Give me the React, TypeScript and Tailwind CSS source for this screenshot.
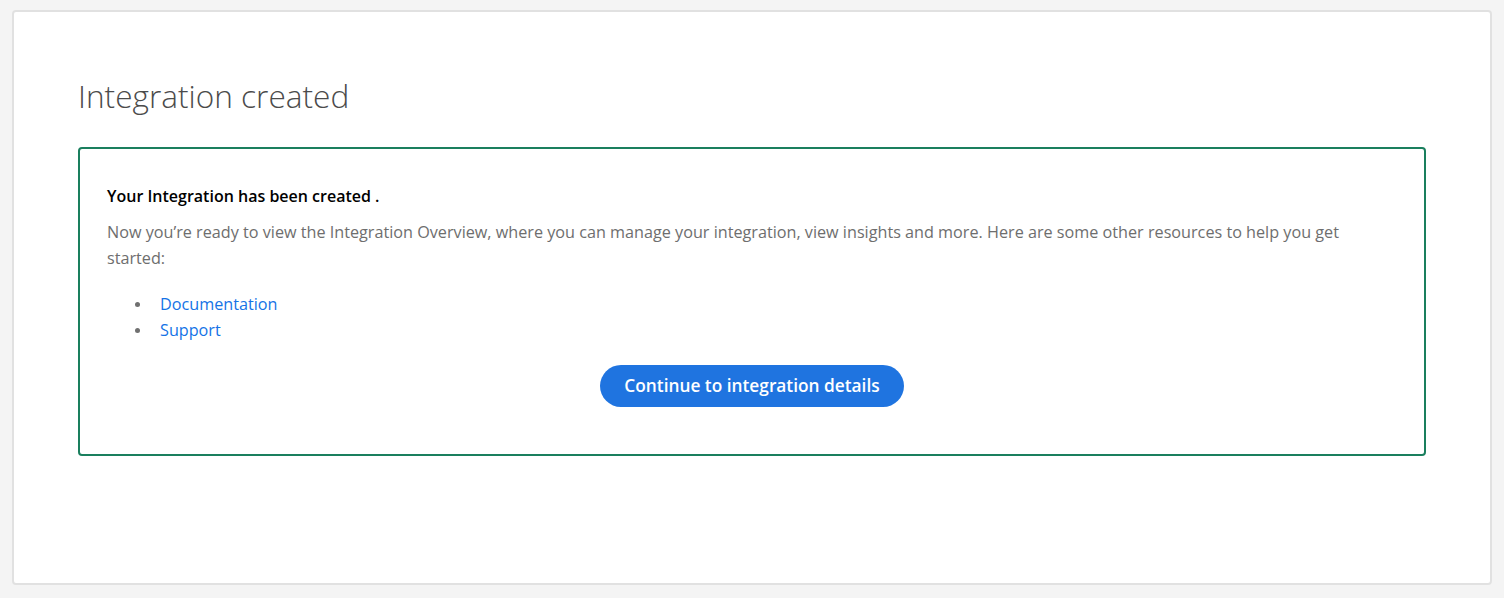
const resources = ["Documentation", "Support"];

export default function App() {
  return (
    <main className="min-h-screen bg-[#f4f4f4] px-3 pt-2.5 pb-3 font-['Open_Sans',sans-serif]">
      <section className="h-[575px] rounded-[4px] border-2 border-[#e1e1e1] bg-white px-[64px] pt-[62px]">
        <h1 className="text-[31.6px] font-light leading-[44px] text-[#4b4b4b]">Integration created</h1>

        <div className="mt-[29px] rounded-[4px] border-2 border-[#1a7f5e] px-[27px] pt-[36px] pb-[47px]">
          <h2 className="text-[16px] font-semibold leading-[22px] text-black">Your Integration has been created .</h2>
          <p className="mt-[12px] text-[16.2px] leading-[26px] text-[#6e6e6e]">
            Now you’re ready to view the Integration Overview, where you can manage your integration, view insights and more. Here are some other resources to help you get started:
          </p>

          <ul className="mt-[20px] text-[16.2px] leading-[26px]">
            {resources.map((item) => (
              <li key={item} className="flex items-center">
                <span className="ml-[28px] mr-[20px] h-[5px] w-[5px] rounded-full bg-[#707070]" />
                <a href="#" className="text-[#1473e6]">
                  {item}
                </a>
              </li>
            ))}
          </ul>

          <div className="mt-[22px] flex justify-center">
            <button className="h-[42px] rounded-full bg-[#1f74e0] px-[24px] text-[17.3px] font-semibold text-white">
              Continue to integration details
            </button>
          </div>
        </div>
      </section>
    </main>
  );
}
